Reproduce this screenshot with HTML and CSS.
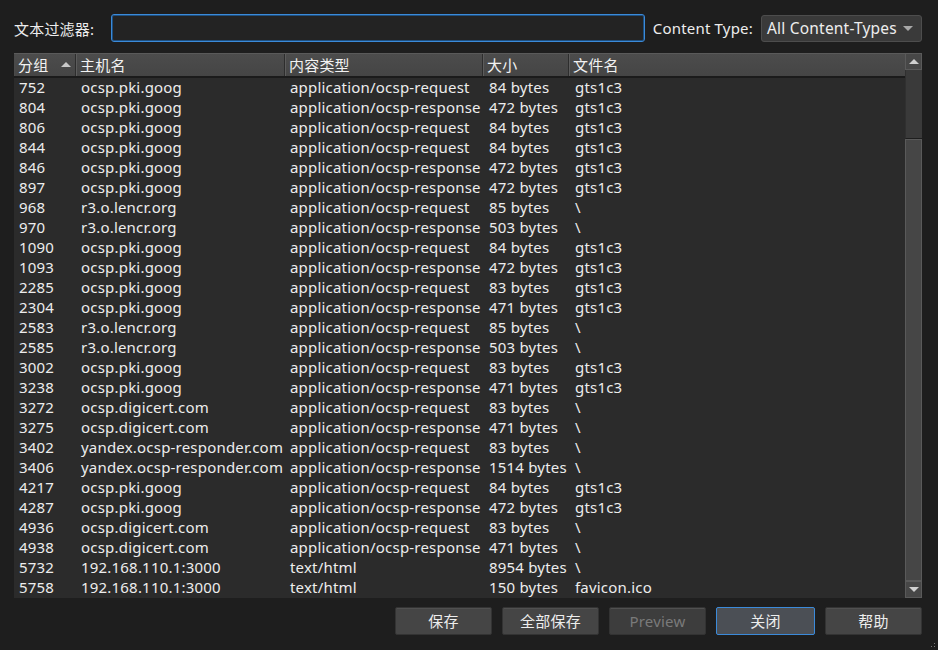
FILE: index.html
```html
<!DOCTYPE html>
<html>
<head>
<meta charset="utf-8">
<link rel="stylesheet" href="styles.css">
</head>
<body>
<div class="dlg">
  <div class="toolbar">
    <span class="lbl">文本过滤器:</span>
    <div class="input"></div>
    <span class="lbl ct">Content Type:</span>
    <div class="combo"><span>All Content-Types</span><i class="caret"></i></div>
  </div>
  <div class="table">
    <div class="main">
      <div class="row head">
        <div class="hc">分组<i class="sort"></i></div>
        <div class="hc">主机名</div>
        <div class="hc">内容类型</div>
        <div class="hc">大小</div>
        <div class="hc last">文件名</div>
      </div>
      <div class="rows" id="rows"></div>
    </div>
    <div class="vscroll">
      <div class="sbtn"><i class="up"></i></div>
      <div class="track"></div>
      <div class="thumb"></div>
      <div class="sbtn"><i class="down"></i></div>
    </div>
  </div>
  <div class="buttons">
    <div class="btn">保存</div>
    <div class="btn">全部保存</div>
    <div class="btn dis">Preview</div>
    <div class="btn def">关闭</div>
    <div class="btn">帮助</div>
  </div>
  <div class="grip"></div>
</div>
<script src="app.js"></script>
</body>
</html>
```
FILE: app.js
```js
var R = "application/ocsp-request", S = "application/ocsp-response";
var d = [
["752","ocsp.pki.goog",R,"84 bytes","gts1c3"],
["804","ocsp.pki.goog",S,"472 bytes","gts1c3"],
["806","ocsp.pki.goog",R,"84 bytes","gts1c3"],
["844","ocsp.pki.goog",R,"84 bytes","gts1c3"],
["846","ocsp.pki.goog",S,"472 bytes","gts1c3"],
["897","ocsp.pki.goog",S,"472 bytes","gts1c3"],
["968","r3.o.lencr.org",R,"85 bytes","\\"],
["970","r3.o.lencr.org",S,"503 bytes","\\"],
["1090","ocsp.pki.goog",R,"84 bytes","gts1c3"],
["1093","ocsp.pki.goog",S,"472 bytes","gts1c3"],
["2285","ocsp.pki.goog",R,"83 bytes","gts1c3"],
["2304","ocsp.pki.goog",S,"471 bytes","gts1c3"],
["2583","r3.o.lencr.org",R,"85 bytes","\\"],
["2585","r3.o.lencr.org",S,"503 bytes","\\"],
["3002","ocsp.pki.goog",R,"83 bytes","gts1c3"],
["3238","ocsp.pki.goog",S,"471 bytes","gts1c3"],
["3272","ocsp.digicert.com",R,"83 bytes","\\"],
["3275","ocsp.digicert.com",S,"471 bytes","\\"],
["3402","yandex.ocsp-responder.com",R,"83 bytes","\\"],
["3406","yandex.ocsp-responder.com",S,"1514 bytes","\\"],
["4217","ocsp.pki.goog",R,"84 bytes","gts1c3"],
["4287","ocsp.pki.goog",S,"472 bytes","gts1c3"],
["4936","ocsp.digicert.com",R,"83 bytes","\\"],
["4938","ocsp.digicert.com",S,"471 bytes","\\"],
["5732","192.168.110.1:3000","text/html","8954 bytes","\\"],
["5758","192.168.110.1:3000","text/html","150 bytes","favicon.ico"]
];
var box = document.getElementById("rows");
d.forEach(function (r) {
  var row = document.createElement("div");
  row.className = "row";
  r.forEach(function (c) {
    var cell = document.createElement("div");
    cell.className = "c";
    cell.textContent = c;
    row.appendChild(cell);
  });
  box.appendChild(row);
});
```
FILE: styles.css
```css
html, body { margin: 0; padding: 0; background: #1e1e1e; }
body {
  width: 938px; height: 650px; overflow: hidden;
  font-family: "Segoe UI", "Noto Sans", "Noto Sans CJK SC", sans-serif;
  font-size: 15px; color: #ededed; letter-spacing: 0.2px;
}
.dlg { padding: 14px 16px 0 14px; position: relative; height: 636px; }
.toolbar { display: flex; align-items: center; height: 28px; }
.lbl { white-space: nowrap; }
.toolbar .lbl:first-child { width: 97px; flex: none; }
.input {
  flex: 1; height: 26px;
  border: 1px solid #3b8ad9; border-radius: 3px; background: #232323;
  box-shadow: inset 0 0 0 1px #1e4f7f;
}
.ct { margin-left: 8px; }
.combo {
  margin-left: 8px; width: 154px; height: 25px; flex: none;
  border: 1px solid #4d4d4d; border-radius: 3px; background: #3a3a3a;
  display: flex; align-items: center; justify-content: space-between;
  padding: 0 0 0 5px; font-size: 15.5px;
}
.caret {
  width: 0; height: 0; margin-right: 8px;
  border-left: 5px solid transparent; border-right: 5px solid transparent;
  border-top: 5px solid #a8a8a8;
}
.table {
  margin-top: 11px; display: flex; height: 545px;
  background: #2b2b2b;
}
.main { width: 891px; }
.row { display: grid; grid-template-columns: 62px 209px 198px 86px 1fr; height: 20px; line-height: 19px; }
.c { padding-left: 5px; white-space: nowrap; overflow: hidden; }
.c:nth-child(4) { padding-left: 6px; }
.c:nth-child(5) { padding-left: 6px; }
.head {
  height: 25px; line-height: 22px;
  background: linear-gradient(#4c4c4c, #454545);
  border-top: 1px solid #5a5a5a;
  border-bottom: 2px solid #1b1b1b; box-sizing: border-box;
}
.hc {
  padding-left: 3px; border-left: 1px solid #5c5c5c; border-right: 1px solid #2d2d2d;
  position: relative; white-space: nowrap; color: #f2f2f2;
}
.hc:first-child { border-left: 1px solid #4a4a4a; }
.hc.last { border-right: none; }
.sort {
  position: absolute; left: 46px; top: 8px; width: 0; height: 0;
  border-left: 5px solid transparent; border-right: 5px solid transparent;
  border-bottom: 5px solid #c8c8c8;
}
.vscroll {
  width: 17px; display: flex; flex-direction: column;
  background: #232323;
}
.sbtn {
  height: 15px; border: 1px solid #5a5a5a; background: #474747;
  display: flex; align-items: center; justify-content: center;
}
.up { width: 0; height: 0; border-left: 5px solid transparent; border-right: 5px solid transparent; border-bottom: 5px solid #d0d0d0; }
.down { width: 0; height: 0; border-left: 5px solid transparent; border-right: 5px solid transparent; border-top: 5px solid #d0d0d0; }
.track { height: 68px; background: #3a3a3a; border-bottom: 1px solid #1e1e1e; border-left: 1px solid #303030; }
.thumb { flex: 1; background: #464646; border: 1px solid #5a5a5a; }
.buttons { display: flex; justify-content: flex-end; gap: 10px; margin-top: 9px; }
.btn {
  width: 95px; height: 26px; line-height: 26px; text-align: center;
  border: 1px solid #333; border-radius: 2px; background: #454545;
  box-shadow: inset 0 1px 0 #505050;
}
.btn.dis { color: #7a7a7a; background: #3d3d3d; }
.btn.def { border-color: #3b8ad9; background: #4b4f55; width: 97px; }
.grip {
  position: absolute; right: 1px; bottom: 1px; width: 10px; height: 10px;
  background: radial-gradient(circle, #777 0.8px, transparent 1px) 0 0 / 3px 3px;
  clip-path: polygon(100% 0, 100% 100%, 0 100%);
}
```
